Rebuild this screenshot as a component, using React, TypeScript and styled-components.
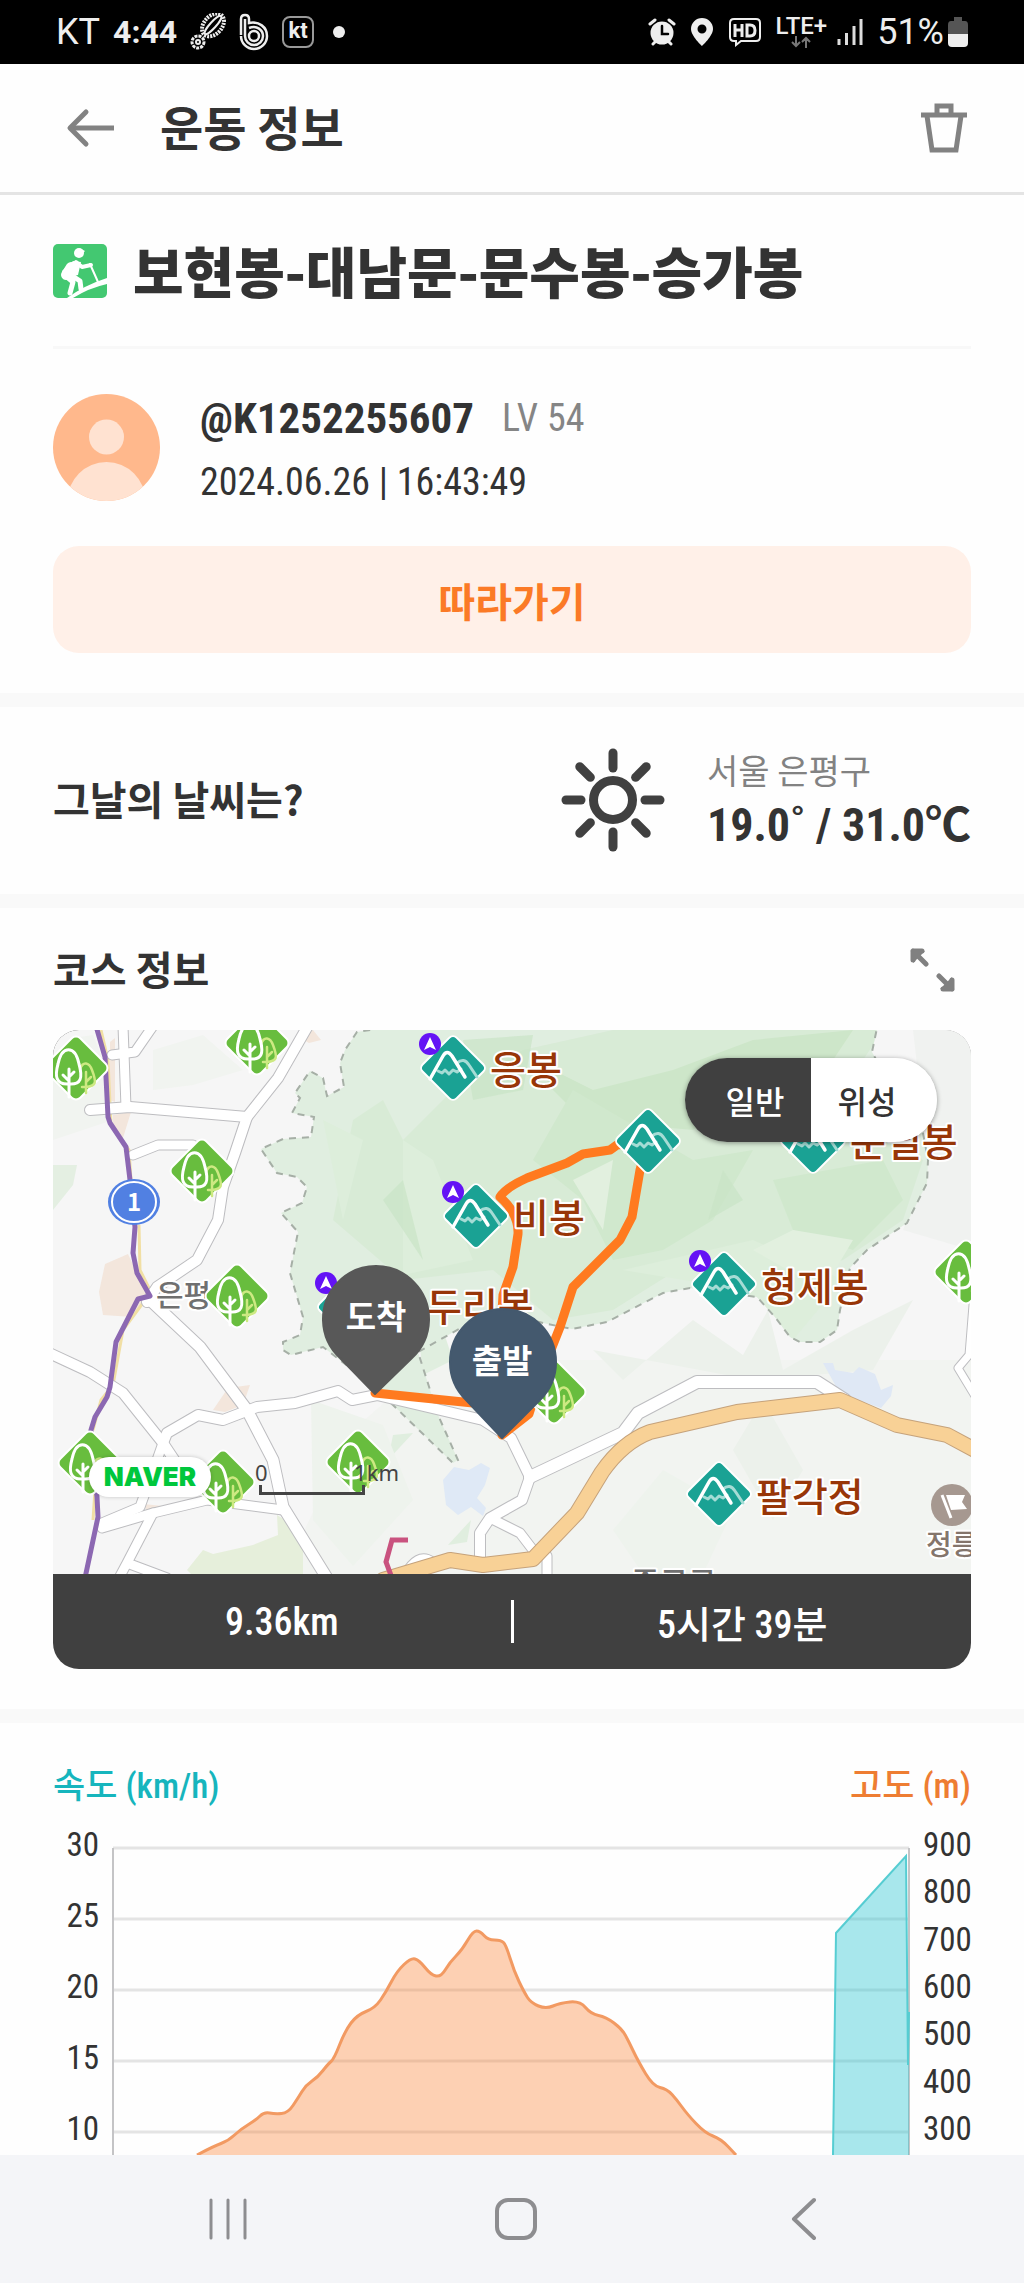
import React, { useState } from "react";
import styled, { createGlobalStyle } from "styled-components";

const GlobalStyle = createGlobalStyle`
  * { box-sizing: border-box; }
  html, body { margin: 0; padding: 0; background: #fefefe; }
  body { font-family: "Noto Sans CJK KR", sans-serif; color: #333; }
  h1, h2, p { margin: 0; }
  button { font: inherit; color: inherit; border: 0; padding: 0; background: none; cursor: pointer; }
  svg { display: block; flex-shrink: 0; }
`;

const narrow = `"Roboto Condensed", "Noto Sans CJK KR", sans-serif`;

const Screen = styled.div`
  display: flex;
  flex-direction: column;
  height: 100vh;
  overflow: hidden;
`;

const StatusBar = styled.div`
  display: flex;
  justify-content: space-between;
  align-items: center;
  flex: none;
  height: 64px;
  padding: 0 56px;
  background: #000;
  color: #eee;
  font-family: Roboto, sans-serif;
  font-size: 36px;
  line-height: 40px;
`;

const StatusGroup = styled.div<{ $gap: number }>`
  display: flex;
  align-items: center;
  gap: ${(p) => p.$gap}px;
`;

const Clock = styled.span`
  font-size: 32px;
  font-weight: 700;
`;

const KtBadge = styled.span`
  width: 32px;
  height: 32px;
  border: 2px solid #999;
  border-radius: 8px;
  font-size: 22px;
  font-weight: 700;
  line-height: 26px;
  text-align: center;
`;

const Dot = styled.span`
  width: 12px;
  height: 12px;
  margin-left: 6px;
  border-radius: 50%;
  background: #eee;
`;

const Network = styled.span`
  display: flex;
  flex-direction: column;
  align-items: center;
  font-size: 24px;
  font-weight: 500;
  line-height: 20px;
`;

const Header = styled.header`
  display: flex;
  align-items: center;
  flex: none;
  height: 131px;
  padding: 0 56px 0 64px;
  border-bottom: 3px solid #e4e4e4;
`;

const IconButton = styled.button`
  display: flex;
  align-items: center;
  justify-content: center;
`;

const HeaderTitle = styled.h1`
  flex: 1;
  margin-left: 44px;
  padding-bottom: 4px;
  font-size: 47px;
  font-weight: 700;
  line-height: 64px;
`;

const Main = styled.main`
  flex: 1;
  min-height: 0;
  overflow: hidden;
`;

const Section = styled.section<{ $top: number; $bottom: number }>`
  padding: ${(p) => p.$top}px 53px ${(p) => p.$bottom}px;
  border-bottom: 14px solid #f9f9f9;
`;

const TitleRow = styled.div`
  display: flex;
  align-items: center;
  gap: 26px;
  height: 154px;
  border-bottom: 3px solid #f8f8f8;
`;

const CourseName = styled.h2`
  padding-bottom: 4px;
  font-size: 55px;
  font-weight: 900;
  line-height: 80px;
  white-space: nowrap;
`;

const UserRow = styled.div`
  display: flex;
  align-items: center;
  gap: 40px;
  height: 107px;
  margin: 45px 0;
`;

const UserText = styled.div`
  font-family: ${narrow};
  padding-top: 4px;
`;

const NameLine = styled.div`
  display: flex;
  align-items: center;
  gap: 28px;
  line-height: 64px;
`;

const UserName = styled.span`
  font-size: 43px;
  font-weight: 700;
`;

const Level = styled.span`
  font-size: 38px;
  color: #858585;
`;

const DateLine = styled.p`
  font-size: 38px;
  line-height: 64px;
`;

const FollowButton = styled.button`
  width: 100%;
  height: 107px;
  border-radius: 26px;
  background: #fff0e8;
  color: #fb7a26;
  font-size: 40px;
  font-weight: 700;
`;

const Row = styled.div`
  display: flex;
  align-items: center;
  justify-content: space-between;
`;

const SectionTitle = styled.h2`
  padding-bottom: 4px;
  font-size: 40px;
  font-weight: 700;
  line-height: 56px;
`;

const Weather = styled.div`
  display: flex;
  align-items: center;
  gap: 42px;
`;

const Place = styled.p`
  color: #828282;
  font-size: 34px;
  line-height: 50px;
`;

const Temperature = styled.p`
  font-family: ${narrow};
  font-size: 46px;
  font-weight: 700;
  line-height: 60px;
  white-space: nowrap;
`;

const MapCard = styled.div`
  overflow: hidden;
  margin-top: 30px;
  border-radius: 26px;
  background: #404040;
`;

const MapView = styled.div`
  position: relative;
  height: 544px;
  overflow: hidden;
  background: #f6f6f6;
`;

const MapToggle = styled.div`
  position: absolute;
  top: 28px;
  right: 34px;
  display: flex;
  width: 252px;
  height: 84px;
  overflow: hidden;
  border-radius: 42px;
  box-shadow: 0 1px 5px rgba(0, 0, 0, 0.4);
`;

const ToggleOption = styled.button<{ $active: boolean; $side: "left" | "right" }>`
  flex: 1;
  padding: ${(p) => (p.$side === "left" ? "0 0 0 14px" : "0 14px 0 0")};
  background: ${(p) => (p.$active ? "#404040" : "#fff")};
  color: ${(p) => (p.$active ? "#fff" : "#333")};
  font-size: 32px;
  font-weight: 500;
`;

const NaverBadge = styled.span`
  position: absolute;
  left: 36px;
  bottom: 77px;
  width: 122px;
  height: 40px;
  border-radius: 20px;
  background: #fff;
  box-shadow: 0 0 4px rgba(0, 0, 0, 0.2);
  color: #00c73c;
  font-family: Inter, sans-serif;
  font-size: 26px;
  font-weight: 900;
  line-height: 40px;
  text-align: center;
`;

const ScaleBar = styled.div`
  position: absolute;
  left: 202px;
  bottom: 79px;
  width: 144px;
  color: #444;
  font-family: "Noto Sans", sans-serif;
  font-size: 22px;
  line-height: 26px;
`;

const ScaleTick = styled.div`
  width: 106px;
  height: 10px;
  margin-left: 4px;
  border: 3px solid #444;
  border-top: 0;
`;

const Summary = styled.div`
  display: grid;
  grid-template-columns: 1fr 3px 1fr;
  align-items: center;
  height: 95px;
  color: #fff;
  font-family: ${narrow};
  font-size: 38px;
  font-weight: 500;
  text-align: center;
`;

const SummaryDivider = styled.span`
  height: 43px;
  background: #fff;
`;

const AxisTitle = styled.span<{ $color: string }>`
  color: ${(p) => p.$color};
  font-family: ${narrow};
  font-size: 35px;
  font-weight: 500;
  line-height: 48px;
`;

const Chart = styled.div`
  display: grid;
  grid-template-columns: 46px 1fr 48px;
  gap: 14px;
  margin-top: 14px;
`;

const Axis = styled.div`
  display: flex;
  flex-direction: column;
  justify-content: space-between;
  height: 324px;
  font-family: ${narrow};
  font-size: 33px;
  line-height: 40px;
  text-align: right;
`;

const Plot = styled.svg`
  width: 100%;
  height: 307px;
  margin-top: 23px;
  overflow: visible;
`;

const ChartSection = styled.section`
  padding: 40px 53px 0;
`;

const NavBar = styled.nav`
  display: flex;
  align-items: center;
  justify-content: space-between;
  flex: none;
  height: 128px;
  padding: 0 181px 0 188px;
  background: #f4f5f8;
`;

const NavButton = styled(IconButton)`
  width: 80px;
  height: 80px;
`;

const ROADS: [string, number][] = [
  ["M70 -4L73 77", 9],
  ["M100 -4L82 22L59 25", 9],
  ["M37 80L77 77L194 87", 10],
  ["M80 125L105 115H140", 9],
  ["M256 -6L225 48L194 87L182 123L170 157L165 190L144 230L104 257L94 272", 10],
  ["M97 270L147 317L194 380L220 430L230 477L274 548", 11],
  ["M-4 323L37 342L70 363L110 413L124 434", 10],
  ["M110 413L104 430L87 477L49 493", 9],
  ["M49 498L100 483L154 470L230 480", 9],
  ["M100 483L74 533L66 548M74 533L114 548", 9],
  ["M110 413L114 403L145 385L170 390L204 377L242 373L285 361L299 370L324 365L430 390L458 408L477 447L469 470L437 488L427 503V536", 10],
  ["M477 447L570 403L585 383L644 352H764L792 370", 12],
  ["M437 488L467 503L480 520", 9],
  ["M494 526V548", 9],
  ["M922 250L916 325L905 338L922 366", 7],
  ["M350 548Q364 520 380 532", 8],
];

const FOREST =
  "M330 -2L304 2L292 20L287 33L291 57L274 66L270 48L257 41L242 63L247 68L239 83L261 87L258 107L230 109L208 119L224 143L244 147L254 157L249 173L228 183L245 202L237 243L250 287L247 305L230 312V320L238 325L270 317L300 340L340 375L400 433L405 430L385 385L365 322L440 280L490 293L519 299L554 292L610 263L637 258L704 267L722 287L737 307L747 312H767L784 300L787 280L797 238L814 220L854 193L874 153L875 130L870 103L840 60L819 22L824 -2";

const ROUTE =
  "M322 363L420 373L449 376M449 405L476 384L490 340L507 297L520 257L567 210L579 187L587 140L595 111L564 115L557 120L530 124L514 133L474 148Q452 158 447 167Q466 184 465 204L460 237L450 265L446 330";

const Trees = [[23, 38], [204, 13], [149, 141], [184, 266], [37, 433], [170, 452], [305, 432], [501, 362], [913, 242]];
const Peaks = [[400, 38], [423, 186], [297, 277], [595, 111], [760, 111], [671, 254], [666, 464]];
const Badges = [[377, 14], [400, 162], [273, 253], [647, 231]];
const PeakNames: [number, number, string][] = [
  [437, 54, "응봉"],
  [460, 202, "비봉"],
  [373, 291, "두리봉"],
  [797, 126, "문필봉"],
  [708, 271, "형제봉"],
  [703, 481, "팔각정"],
];

const PlaceText = styled.text<{ $size: number; $color: string }>`
  fill: ${(p) => p.$color};
  stroke: #fff;
  stroke-width: 4px;
  stroke-linejoin: round;
  paint-order: stroke;
  font-size: ${(p) => p.$size}px;
  font-weight: 500;
`;

const PinText = styled.text`
  fill: #fff;
  font-size: 33px;
  font-weight: 700;
  text-anchor: middle;
`;

function Tree({ x, y }: { x: number; y: number }) {
  return (
    <g transform={`translate(${x} ${y})`} fill="none" strokeLinecap="round">
      <rect x="-24" y="-24" width="48" height="48" rx="6" transform="rotate(45)" fill="#68bd3e" stroke="#fff" strokeWidth="2" />
      <path d="M10 25V4M10 14L15 9M4 1C7 -7 13 -6 16 2C21 15 20 18 10 19H6" stroke="#cde982" strokeWidth="2.5" />
      <path d="M-7 29V1M-7 13L-13 7M-7 9L-2 4M-7 16C-21 17 -21 7 -18 -4C-14 -23 -1 -23 3 -4C7 10 5 17 -7 16" stroke="#fff" strokeWidth="3" />
    </g>
  );
}

function Peak({ x, y }: { x: number; y: number }) {
  return (
    <g transform={`translate(${x} ${y})`} fill="none" strokeLinecap="round" strokeLinejoin="round">
      <rect x="-24" y="-24" width="48" height="48" rx="5" transform="rotate(45)" fill="#1aa294" stroke="#fff" strokeWidth="2" />
      <path d="M4 -5Q11 -11 16 -3L24 9M-15 3L-11 5L-8 2L-4 6L0 2L4 4L8 1" stroke="#a5dcd5" strokeWidth="3" />
      <path d="M-23 11L-10 -12Q-6 -19 -1 -12L12 9" stroke="#fff" strokeWidth="3.5" />
    </g>
  );
}

function CourseMap() {
  return (
    <svg width="100%" height="100%" viewBox="0 0 918 544" preserveAspectRatio="xMidYMid slice" role="img" aria-label="코스 지도">
      <defs>
        <clipPath id="forest"><path d={FOREST} /></clipPath>
      </defs>
      <path d="M230 544L300 400L380 330H918V544Z" fill="#f2f4f1" />
      <path d="M860 0H918V220L850 200L875 130Z" fill="#f0f2f0" />
      <path d="M0 60L20 80L0 90ZM0 135H24L20 155L0 180Z" fill="#e4efe2" />
      <path d="M20 8L40 5L56 45L60 90L0 110V45ZM100 20L150 5L190 40L140 55L100 60Z" fill="#f1f4f0" />
      <path d="M134 540L150 520L160 524L200 515L225 505L224 485L232 490L250 520V544H138Z" fill="#e6efdb" />
      <path d="M340 405L360 403L335 430ZM395 515L418 490L414 512ZM365 300L380 270L400 330L370 345Z" fill="#e0eedf" />
      <path d="M258 370L330 395L360 470L300 536L260 490ZM560 500L610 440L680 480L650 544H590Z" fill="#eef3ed" />
      <path d="M540 320L570 350L640 290L690 325L715 280L730 340L800 300L860 270L820 340L700 350ZM680 420L710 370L750 440L720 490Z" fill="#ecf1eb" />
      <g fill="#f3e6dc">
        <path d="M57 12L62 8V72L57 70ZM60 85L78 82L70 108L60 96ZM247 8L260 0L268 10L256 13Z" />
        <path d="M75 224L52 234L46 262L50 285L80 287L97 266L84 243Z" />
        <path d="M160 380L175 358L197 355L190 375L172 382ZM90 474L110 476L96 484Z" />
      </g>
      <path d={FOREST} fill="#e0eee0" />
      <g clipPath="url(#forest)">
        <path d="M300 90L330 70L350 110L400 60L470 20L560 0H830L790 60L870 130L850 190L790 230L730 250L640 230L560 280L500 290L440 240L350 250L280 190Z" fill="#d8ebd6" />
        <path d="M480 30L540 60L620 40L700 10L800 0L760 60L700 60L640 100L530 90L500 60Z" fill="#cde6c9" />
        <path d="M520 60L640 130L700 120L660 190L610 220L560 230L530 170L480 130ZM720 150L830 130L850 170L800 220L740 200Z" fill="#d0e8cd" />
        <path d="M350 110L380 130L420 230L350 245ZM270 90L310 110L290 190ZM570 240L700 210L790 250L740 310L690 260Z" fill="#ddeedb" />
        <path d="M670 140L690 170L655 190ZM690 60L720 30L740 70L700 90ZM410 10L480 5L470 60L420 70ZM330 170L350 150L370 230Z" fill="#c9e4c6" opacity=".7" />
        <path d="M740 200L800 210L770 260L700 220ZM520 150L560 130L550 200Z" fill="#e2f0df" />
      </g>
      <path d={FOREST} fill="none" stroke="#a6afa6" strokeWidth="2" strokeDasharray="7 6" />
      <path d="M390 450L401 437L416 440L428 433L437 438L432 455L424 468L433 478L430 486L418 477L405 485L393 475Z" fill="#dfe9f6" />
      <path d="M770 333H780L782 340L800 343L806 337L822 344L828 360L840 355L838 366L828 378L805 370L785 360Z" fill="#dfe8f5" />
      <path d="M48 0L55 30L58 95L76 120L78 150M86 195L87 240L98 262L70 300L60 355L48 370L40 400M42 460L40 490" fill="none" stroke="#f1dfa4" strokeWidth="3" />
      <g fill="none" strokeLinecap="round" strokeLinejoin="round">
        {ROADS.map(([d, w]) => <path key={d} d={d} stroke="#bdbdc0" strokeWidth={w + 2} />)}
        {ROADS.map(([d, w]) => <path key={d} d={d} stroke="#fff" strokeWidth={w} />)}
        <path d="M330 550L397 530L430 535L480 529L524 483L549 442Q570 412 597 402L684 382L787 370L844 395L894 405L922 420" stroke="#c5a27b" strokeWidth="16" />
        <path d="M330 550L397 530L430 535L480 529L524 483L549 442Q570 412 597 402L684 382L787 370L844 395L894 405L922 420" stroke="#f8d196" strokeWidth="14" />
        <path d="M43 -4L52 27L55 87L57 93L73 117L77 150L82 197L80 223L84 243L97 266L85 269L63 312L57 357L54 367L42 387L38 400L44 467L45 487L32 548" stroke="#8c68b2" strokeWidth="5" />
      </g>
      <path d="M355 510H339L333 532L339 548" fill="none" stroke="#c9527f" strokeWidth="5" />
      <PlaceText x="103" y="276" $size={30} $color="#707070">은평</PlaceText>
      <PlaceText x="578" y="564" $size={31} $color="#707070">종로구</PlaceText>
      <PlaceText x="873" y="525" $size={28} $color="#84756c">정릉</PlaceText>
      <circle cx="899" cy="475" r="21" fill="#a69890" />
      <path d="M889 465L898 488" stroke="#fff" strokeWidth="3" />
      <path d="M893 465H912L909 472L914 479L898 480Z" fill="#fff" />
      <path d={ROUTE} fill="none" stroke="#ff7a1f" strokeWidth="9" strokeLinecap="round" strokeLinejoin="round" />
      {Trees.map(([x, y]) => <Tree key={`${x}-${y}`} x={x} y={y} />)}
      {Peaks.map(([x, y]) => <Peak key={`${x}-${y}`} x={x} y={y} />)}
      {Badges.map(([x, y]) => (
        <g key={`${x}-${y}`} transform={`translate(${x} ${y})`}>
          <circle r="11" fill="#6413f5" />
          <path d="M0 -7L6 6L0 3L-6 6Z" fill="#fff" />
        </g>
      ))}
      {PeakNames.map(([x, y, name]) => (
        <PlaceText key={name} x={x} y={y} $size={39} $color="#983608">{name}</PlaceText>
      ))}
      <ellipse cx="81" cy="172" rx="26" ry="23" fill="#5180e2" />
      <ellipse cx="81" cy="172" rx="22" ry="20" fill="none" stroke="#fff" strokeWidth="2" />
      <text x="81" y="181" fill="#fff" fontFamily="Noto Sans CJK KR" fontSize="24" fontWeight="700" textAnchor="middle">1</text>
      <path d="M322 364L287 328A53 53 0 1 1 359 328Z" fill="#585858" stroke="#585858" strokeWidth="2" strokeLinejoin="round" />
      <PinText x="323" y="299">도착</PinText>
      <path d="M449 408L413 370A53 53 0 1 1 487 370Z" fill="#44596e" stroke="#44596e" strokeWidth="2" strokeLinejoin="round" />
      <PinText x="449" y="343">출발</PinText>
    </svg>
  );
}

const ALTITUDE = [
  [84, 307], [101, 298], [115, 293], [128, 281], [143, 272], [151, 264], [162, 266], [175, 265], [185, 250], [193, 237],
  [205, 229], [215, 216], [221, 211], [232, 183], [244, 167], [262, 160], [273, 144], [284, 123], [298, 110], [306, 112],
  [318, 127], [328, 129], [337, 114], [349, 102], [360, 83], [367, 83], [375, 92], [388, 92], [393, 97], [401, 123],
  [411, 144], [418, 155], [433, 161], [447, 155], [467, 153], [478, 166], [493, 169], [509, 181], [516, 194], [525, 213],
  [540, 238], [554, 241], [564, 252], [574, 266], [592, 285], [608, 291], [623, 307],
];

function smooth(points: number[][]) {
  let d = `M${points[0][0]} ${points[0][1]}`;
  for (let i = 1; i < points.length - 1; i++) {
    const [x, y] = points[i];
    const [nx, ny] = points[i + 1];
    d += `Q${x} ${y} ${(x + nx) / 2} ${(y + ny) / 2}`;
  }
  const last = points[points.length - 1];
  return `${d}L${last[0]} ${last[1]}`;
}

const altitudePath = smooth(ALTITUDE);

function SpeedAltitudePlot() {
  return (
    <Plot viewBox="0 0 796 307" preserveAspectRatio="none" role="img" aria-label="속도와 고도 그래프">
      {[0, 71, 142, 213, 284].map((y) => <path key={y} d={`M0 ${y}H796`} stroke="#e4e4e4" strokeWidth="3" />)}
      <path d="M0 0V307M796 0V307" stroke="#c4c4c6" strokeWidth="2" />
      <path d={`${altitudePath}Z`} fill="#fb7b28" fillOpacity=".35" />
      <path d={altitudePath} fill="none" stroke="#f29a62" strokeWidth="3" />
      <path d="M720 307L723 85L793 8L795 217L796 164V307Z" fill="#1cc3cf" fillOpacity=".38" />
      <path d="M720 307L723 85L793 8L795 217L796 164" fill="none" stroke="#56cdd2" strokeWidth="2" />
    </Plot>
  );
}

export default function App() {
  const [mode, setMode] = useState("일반");
  return (
    <>
      <GlobalStyle />
      <Screen>
        <StatusBar>
          <StatusGroup $gap={13}>
            <span>KT</span>
            <Clock>4:44</Clock>
            <svg width="36" height="38" viewBox="0 0 36 38" fill="none" stroke="#eee">
              <ellipse cx="23" cy="12" rx="9" ry="13" transform="rotate(42 23 12)" strokeWidth="4" strokeDasharray="2 1" />
              <ellipse cx="23" cy="12" rx="3" ry="12" transform="rotate(42 23 12)" strokeWidth="2" />
              <circle cx="8" cy="29" r="6" strokeWidth="3" strokeDasharray="3 1" />
              <circle cx="8" cy="29" r="2" strokeWidth="2" />
            </svg>
            <svg width="30" height="38" viewBox="0 0 30 38" fill="none" stroke="#eee" strokeWidth="2.5">
              <path d="M2 22V6Q2 2 6 2T10 6V10C20 8 28 14 28 23A13 13 0 0 1 2 23" />
              <path d="M6 23V6M10 15C18 12 24 17 24 23A9 9 0 0 1 6 23" />
              <circle cx="15" cy="23" r="5" />
            </svg>
            <KtBadge>kt</KtBadge>
            <Dot />
          </StatusGroup>
          <StatusGroup $gap={14}>
            <svg width="28" height="28" viewBox="0 0 28 28" fill="none" stroke="#eee" strokeLinecap="round">
              <circle cx="14" cy="15" r="11.5" fill="#eee" stroke="none" />
              <path d="M2 6L7 2M26 6L21 2M5 26L8 23M23 26L20 23" strokeWidth="3" />
              <path d="M14 8V16H20" stroke="#000" strokeWidth="2.5" />
            </svg>
            <svg width="24" height="30" viewBox="0 0 24 30">
              <path fill="#eee" fillRule="evenodd" d="M12 1A11 11 0 0 0 1 12C1 19 12 29 12 29S23 19 23 12A11 11 0 0 0 12 1M12 7.500A4.500 4.500 0 1 1 12 16.500A4.500 4.500 0 1 1 12 7.500" />
            </svg>
            <svg width="34" height="30" viewBox="0 0 34 30" fill="none" stroke="#eee">
              <path d="M6 2H28Q32 2 32 6V20Q32 24 28 24H13L8 28V24H6Q2 24 2 20V6Q2 2 6 2Z" strokeWidth="2" />
              <path d="M7 7V20M14 7V20M7 13H14M19 8V19H22Q27 19 27 13.500T22 8Z" strokeWidth="3" />
            </svg>
            <StatusGroup $gap={10}>
              <Network>
                LTE+
                <svg width="20" height="12" viewBox="0 0 20 12" fill="none" stroke="#777" strokeWidth="2">
                  <path d="M5 0V10M1 6L5 10L9 6M15 12V2M11 6L15 2L19 6" />
                </svg>
              </Network>
              <svg width="26" height="28" viewBox="0 0 26 28" stroke="#ddd" strokeWidth="3">
                <path d="M2 21V27M9.500 15V27M17 8V27M24 1V27" />
              </svg>
            </StatusGroup>
            <StatusGroup $gap={4}>
              <span>51%</span>
              <svg width="20" height="30" viewBox="0 0 20 30">
                <path d="M6 0H14V4H17Q20 4 20 8V17H0V8Q0 4 3 4H6Z" fill="#555" />
                <path d="M0 17H20V26Q20 30 16 30H4Q0 30 0 26Z" fill="#eee" />
              </svg>
            </StatusGroup>
          </StatusGroup>
        </StatusBar>

        <Header>
          <IconButton aria-label="뒤로">
            <svg width="52" height="44" viewBox="0 0 52 44" fill="none" stroke="#828282" strokeWidth="5" strokeLinejoin="round">
              <path d="M50 22H6" />
              <path d="M22 6L6 22L22 38" strokeLinecap="round" />
            </svg>
          </IconButton>
          <HeaderTitle>운동 정보</HeaderTitle>
          <IconButton aria-label="삭제">
            <svg width="48" height="52" viewBox="0 0 48 52" fill="none" stroke="#828282" strokeWidth="5">
              <path d="M17 12V4H31V12M1 13H47M7 14L12 48H36L41 14" />
            </svg>
          </IconButton>
        </Header>

        <Main>
          <Section $top={0} $bottom={40}>
            <TitleRow>
              <svg width="54" height="54" viewBox="0 0 54 54">
                <rect width="54" height="54" rx="5" fill="#43c871" />
                <circle cx="26" cy="9" r="5" fill="#fff" />
                <path d="M28 5L32 7L29 10Z" fill="#fff" />
                <g fill="none" stroke="#fff" strokeLinejoin="round" strokeLinecap="round">
                  <path d="M18 23L13 31" strokeWidth="10" />
                  <path d="M23 18L29 23L38 21" strokeWidth="4" />
                  <path d="M14 33L20 38L17 49M18 31L27 37L28 45" strokeWidth="5" />
                  <path d="M37 20L45 38" strokeWidth="2" />
                </g>
                <path d="M20 17L28 18L25 31L12 34L9 27Z" fill="#fff" />
                <path d="M14 54Q32 41 54 34V40Q36 44 20 54Z" fill="#fff" />
              </svg>
              <CourseName>보현봉-대남문-문수봉-승가봉</CourseName>
            </TitleRow>
            <UserRow>
              <svg width="107" height="107" viewBox="0 0 107 107">
                <clipPath id="avatar"><circle cx="53.500" cy="53.500" r="53.500" /></clipPath>
                <g clipPath="url(#avatar)">
                  <rect width="107" height="107" fill="#ffb88c" />
                  <circle cx="53.500" cy="43" r="17.500" fill="#ffe2d1" />
                  <circle cx="53.500" cy="107" r="39" fill="#ffe2d1" />
                </g>
              </svg>
              <UserText>
                <NameLine>
                  <UserName>@K1252255607</UserName>
                  <Level>LV 54</Level>
                </NameLine>
                <DateLine>2024.06.26 | 16:43:49</DateLine>
              </UserText>
            </UserRow>
            <FollowButton>따라가기</FollowButton>
          </Section>

          <Section $top={38} $bottom={39}>
            <Row>
              <SectionTitle>그날의 날씨는?</SectionTitle>
              <Weather>
                <svg width="104" height="104" viewBox="-52 -52 104 104" fill="none" stroke="#404040" strokeWidth="9" strokeLinecap="round">
                  <circle r="19.500" />
                  {[0, 45, 90, 135, 180, 225, 270, 315].map((a) => (
                    <path key={a} d="M0 -32V-47" transform={`rotate(${a})`} />
                  ))}
                </svg>
                <div>
                  <Place>서울 은평구</Place>
                  <Temperature>19.0˚ / 31.0℃</Temperature>
                </div>
              </Weather>
            </Row>
          </Section>

          <Section $top={32} $bottom={40}>
            <Row>
              <SectionTitle>코스 정보</SectionTitle>
              <IconButton aria-label="지도 확대">
                <svg width="76" height="44" viewBox="0 0 76 44" fill="#808080" stroke="#808080" strokeWidth="5" strokeLinecap="round" strokeLinejoin="round">
                  <path d="M18 15V3H30ZM57 29V41H45Z" stroke="none" />
                  <path d="M18 12V3H27M18 3L31 16M57 32V41H48M57 41L44 28" fill="none" />
                </svg>
              </IconButton>
            </Row>
            <MapCard>
              <MapView>
                <CourseMap />
                <MapToggle role="group" aria-label="지도 종류">
                  <ToggleOption $side="left" $active={mode === "일반"} onClick={() => setMode("일반")}>일반</ToggleOption>
                  <ToggleOption $side="right" $active={mode === "위성"} onClick={() => setMode("위성")}>위성</ToggleOption>
                </MapToggle>
                <NaverBadge>NAVER</NaverBadge>
                <ScaleBar>
                  <Row><span>0</span><span>1km</span></Row>
                  <ScaleTick />
                </ScaleBar>
              </MapView>
              <Summary>
                <span>9.36km</span>
                <SummaryDivider />
                <span>5시간 39분</span>
              </Summary>
            </MapCard>
          </Section>

          <ChartSection>
            <Row>
              <AxisTitle $color="#16b5bd">속도 (km/h)</AxisTitle>
              <AxisTitle $color="#ee7d32">고도 (m)</AxisTitle>
            </Row>
            <Chart>
              <Axis>{[30, 25, 20, 15, 10].map((v) => <span key={v}>{v}</span>)}</Axis>
              <SpeedAltitudePlot />
              <Axis>{[900, 800, 700, 600, 500, 400, 300].map((v) => <span key={v}>{v}</span>)}</Axis>
            </Chart>
          </ChartSection>
        </Main>

        <NavBar>
          <NavButton aria-label="최근 앱">
            <svg width="38" height="42" viewBox="0 0 38 42" stroke="#8d8d90" strokeWidth="3" strokeLinecap="round">
              <path d="M2 2V40M19 2V40M36 2V40" />
            </svg>
          </NavButton>
          <NavButton aria-label="홈">
            <svg width="44" height="44" viewBox="0 0 44 44" fill="none" stroke="#8d8d90" strokeWidth="4">
              <rect x="3" y="3" width="38" height="38" rx="11" />
            </svg>
          </NavButton>
          <NavButton aria-label="이전">
            <svg width="26" height="44" viewBox="0 0 26 44" fill="none" stroke="#8d8d90" strokeWidth="4" strokeLinecap="round" strokeLinejoin="round">
              <path d="M24 3L4 22L24 41" />
            </svg>
          </NavButton>
        </NavBar>
      </Screen>
    </>
  );
}
